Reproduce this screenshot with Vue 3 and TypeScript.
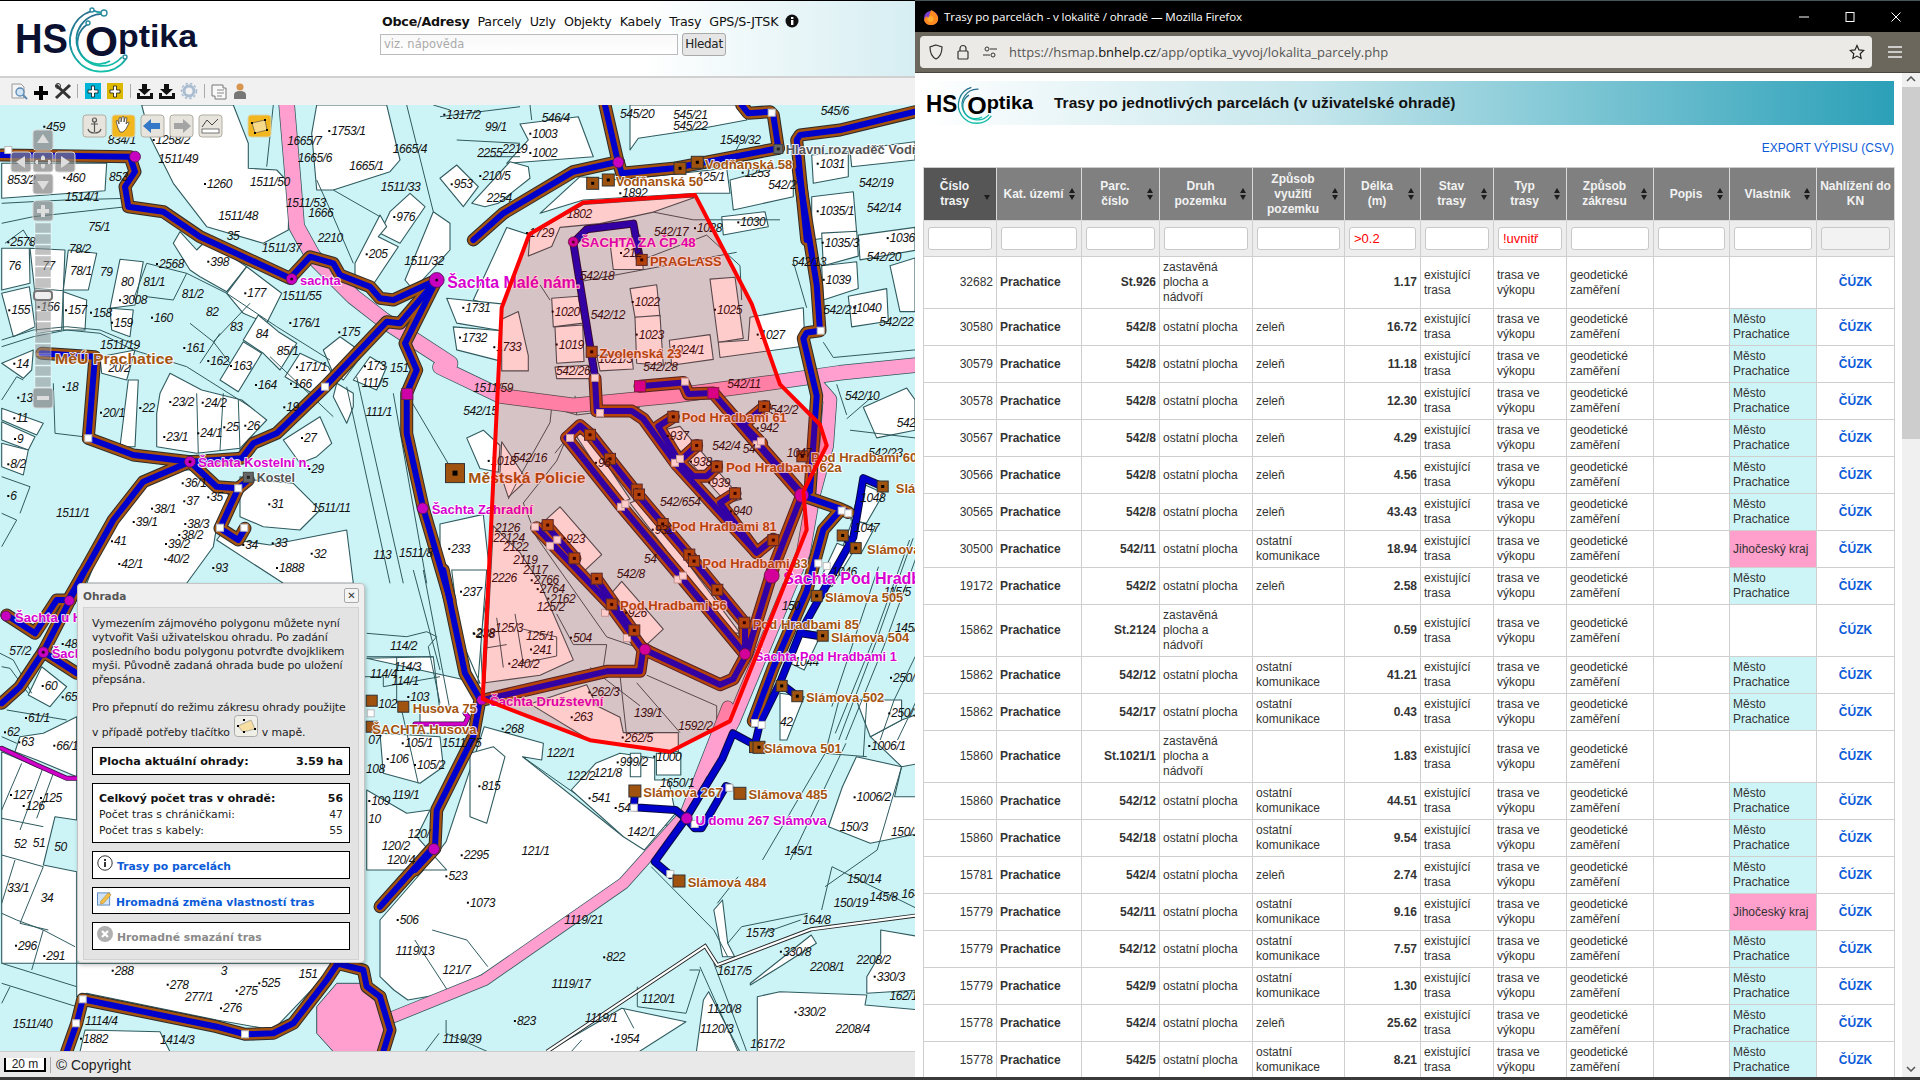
<script setup lang="ts">
type Zm = [number, number, number, number];
const Z6: Zm = [0, 100, 3, 3];
const Z4: Zm = [440, 170, 3, 2.613];
const Z9: Zm = [440, 100, 3, 3];
const Z7: Zm = [380, 700, 2.876, 3];
const Z11: Zm = [340, 570, 3, 3];
const Z10: Zm = [0, 570, 3, 3];
const Z12: Zm = [780, 440, 2.893, 3];
const Z3: Zm = [60, 570, 3, 3];

const px = (z: Zm, x: number) => +(z[0] + x / z[2]).toFixed(1);
const py = (z: Zm, y: number) => +(z[1] + y / z[3]).toFixed(1);
const pts = (z: Zm, s: string) =>
  s.trim().split(/\s+/).map((p) => { const [a, b] = p.split(",").map(Number); return px(z, a) + "," + py(z, b); }).join(" ");
const many = (z: Zm, list: string[]) => list.map((s) => pts(z, s));

const parcels: string[] = [
  ...many(Z6, [
    "5,190 320,190 315,272 5,295",
    "425,15 700,15 745,130 745,205 830,210 868,250 865,390 790,430 620,380 520,250 450,110",
    "950,15 1160,15 1200,180 1170,215 1000,270 950,270 935,100",
    "1170,335 1230,280 1275,320 1200,430 1140,400",
    "1065,490 1140,345 1160,380 1135,410 1195,440 1115,560 1065,540",
    "1300,335 1350,370 1350,450 1240,570 1215,540",
    "520,430 540,395 590,450 620,420 740,500 680,575 600,530 570,510",
    "680,580 740,500 845,580 800,670 730,640",
    "730,720 775,645 835,695 890,730 840,810 790,760",
    "660,840 730,725 785,760 715,875",
    "855,830 900,760 985,800 1000,830 945,885",
    "1060,840 1110,770 1160,800 1130,870",
    "5,445 88,445 90,550 5,570",
    "90,445 195,450 190,575 105,580",
    "205,450 290,460 265,570 190,570",
    "360,478 430,485 405,615 330,625",
    "5,580 88,560 105,680 40,710",
    "105,565 190,572 185,690 110,700",
    "190,575 260,600 255,690 190,690",
    "330,625 400,630 390,710 335,690",
    "5,790 100,750 95,810 70,835",
    "300,770 405,750 380,840 305,820",
    "360,1040 385,840 415,840 405,1040",
    "480,880 510,820 605,870 725,900 800,960 720,1045 590,1060 470,1040 470,940",
    "5,925 130,970 110,1005 5,960",
    "5,965 105,1010 85,1050 5,1020",
    "5,1030 85,1050 70,1125 5,1100",
    "850,1020 960,950 995,1030 950,1070 900,1090",
    "720,1130 760,1140 880,1150 960,1230 900,1290 790,1280 720,1250",
    "650,1320 680,1280 710,1320 810,1335 1040,1290 1060,1450 850,1450",
    "430,1160 530,1110 620,1110 690,1190 650,1280 640,1340 560,1450 260,1450 340,1250",
    "970,750 1020,710 1090,760 1030,840 995,810",
    "1010,850 1060,880 1060,920 1040,970 1000,890",
  ]),
  ...many(Z9, [
    "240,72 415,50 460,170 200,190 265,120",
    "0,235 50,195 115,260 70,320",
    "95,310 210,185 265,200 270,235 175,310 135,320",
    "570,15 915,15 920,60 760,90 595,115 570,150",
    "300,340 420,230 540,240 860,205 870,280 770,280 430,300",
    "870,240 1060,190 1060,290 880,330",
    "845,350 975,335 985,380 850,405",
    "1115,165 1225,155 1225,230 1120,250",
    "1230,150 1425,125 1425,180 1235,200",
    "1115,290 1240,275 1250,400 1115,420",
  ]),
  ...many(Z4, [
    "1145,165 1250,160 1255,225 1150,250",
    "1255,170 1425,150 1425,210 1260,235",
    "1145,250 1250,240 1255,310 1150,340",
    "1225,330 1340,310 1345,395 1235,410",
    "1350,250 1425,230 1425,370 1380,370",
    "200,150 270,170 185,360 100,340",
    "20,335 185,350 185,420 50,400",
    "40,410 185,420 185,500 50,470",
    "80,700 130,680 180,720 175,790 120,780",
    "270,170 430,90 770,70 640,110 480,140 360,150 335,200 265,225",
    "510,190 600,170 610,260 520,260",
    "335,335 415,330 428,400 340,410",
    "345,410 428,405 432,500 350,505",
    "570,310 650,300 660,385 585,385",
    "585,385 660,380 670,510 590,505",
    "688,445 810,430 820,495 695,510",
    "810,285 885,280 910,440 835,450",
    "835,450 925,445 930,385 1090,360 1095,460 840,490",
    "470,485 575,480 580,520 480,525",
    "345,515 445,510 450,545 350,545",
    "185,390 235,370 265,485 265,525 185,525",
    "185,710 260,810 205,855 180,790",
    "405,690 440,690 570,860 540,870",
    "570,870 600,860 900,1210 870,1210",
    "665,680 720,670 905,860 860,870",
    "310,920 360,880 485,1005 430,1050",
    "510,1110 545,1075 670,1200 620,1240",
    "160,930 240,1000 300,1080 400,1280 300,1320 135,1340",
    "270,1395 440,1345 470,1400 540,1430 550,1470 715,1470 715,1520 450,1490",
    "1270,620 1400,570 1425,600 1425,680 1310,700",
    "0,925 130,900 150,1060 120,1220 130,1370 115,1380 80,1280 40,1100 0,1000",
  ]),
  ...many(Z7, [
    "0,660 150,480 190,425 300,80 470,130 465,180 410,170 700,410 720,400 850,370 680,560 320,810 190,880 80,900 40,870 0,830",
    "795,160 865,160 865,225 795,225",
    "550,270 620,190 690,160 790,175 790,240 830,240 850,340 760,450 700,410",
    "720,160 750,160 750,230 720,230",
    "480,1055 695,925 880,965 745,1055",
    "910,1055 930,900 945,875 1035,1055",
    "1085,890 1150,875 1400,885 1395,915 1553,930 1553,1055 1085,1055",
    "1440,690 1553,710 1553,870 1400,880 1400,830 1440,760",
    "1065,850 1240,705 1255,730 1150,800 1065,855",
    "1330,260 1370,170 1500,200 1480,290 1553,290 1553,400 1410,430 1290,380",
    "1410,110 1500,60 1553,40 1553,190 1500,200",
    "1370,0 1500,0 1500,60 1410,110",
    "960,630 985,600 1000,730 1020,770 985,770",
  ]),
  ...many(Z11, [
    "80,265 280,260 300,425 240,420 240,490 410,490 430,390 410,385 440,0 335,0 360,200 420,340",
    "120,490 300,500 310,590 240,640 130,610",
    "80,660 200,730 270,720 230,800 320,900 80,900",
    "390,550 460,530 495,560 440,760 390,740",
  ]),
  ...many(Z10, [
    "85,375 125,290 200,350 150,410",
    "5,530 45,545 60,500 130,490 170,470 230,440 230,620 110,570",
    "5,545 110,590 230,630 230,750 165,740 130,885 230,905 230,1180 5,1180",
  ]),
  ...many(Z3, [
    "50,1180 830,1180 640,1380 470,1350 80,1270 50,1280",
    "75,1380 300,1385 330,1445 60,1445",
  ]),
  ...many(Z12, [
    "235,130 300,160 250,250 205,240",
    "210,240 275,260 235,340 180,325",
    "165,310 215,330 150,440 115,420",
    "70,570 120,580 70,690 30,670",
    "0,760 70,770 20,900 0,900",
  ]),
];

const lines: string[] = [
  ...many(Z6, [
    "5,310 195,300 385,295", "5,370 100,350 380,320", "5,740 100,710 200,690 300,700 400,750 560,800 750,920",
    "5,720 100,690 200,680 300,690 420,740", "1040,860 1170,1450", "1070,830 1210,1450", "1180,880 1280,1450",
    "1220,880 1350,1100", "1000,270 1140,350", "810,770 1000,950", "290,840 280,1010", "160,850 165,1000 250,1010",
    "590,880 595,1060", "670,880 660,1050", "715,900 720,1050", "560,520 680,580 830,680 990,780",
    "570,670 640,725 690,790", "640,725 750,610", "600,790 660,700", "440,490 560,520 520,600 440,590", "440,490 400,600",
    "15,430 70,390 100,440", "1300,15 1350,30", "1220,15 1300,335", "820,15 800,200", "950,240 1000,350", "1000,350 1060,490",
    "5,1130 90,1160 60,1240", "5,1240 50,1260 5,1340", "5,900 50,830 70,840",
  ]),
  ...many(Z9, ["0,50 240,20", "270,15 275,60", "50,120 240,130", "120,170 240,170", "1060,190 1070,120", "860,200 900,130"]),
  ...many(Z4, [
    "335,620 330,660 240,800 205,860", "405,590 410,640 330,620", "345,740 400,680", "380,700 350,760 250,870 290,960 500,1220 600,1250",
    "450,1300 600,1400", "620,1320 830,1400 830,1450", "540,1320 560,1480", "720,1470 590,1340", "650,680 960,1020 990,1050",
    "410,640 600,620", "350,1160 400,1240 500,1240 490,1300", "170,1170 190,1300", "225,1160 250,1290", "250,1200 350,1220 350,1270 240,1290",
    "130,1250 200,1240", "620,230 800,170 900,250 905,340", "430,290 890,215", "300,300 330,340", "1060,240 1100,360", "1150,450 1180,490 1425,470",
    "1220,650 1300,590", "1190,560 1220,640", "1230,680 1425,700", "640,110 760,130 1020,130",
  ]),
  ...many(Z7, [
    "780,500 960,690 1000,770", "1270,630 1300,500 1553,630", "1280,560 1430,450 1500,200", "1100,480 1280,160 1400,170", "1180,480 1340,130",
    "1030,530 970,610", "1000,730 1040,680 1230,640", "1100,700 1210,660", "920,800 1030,1055", "960,790 1055,1055", "740,860 740,920 880,940 920,810 890,810",
    "190,960 190,1000 310,1055", "130,1055 170,1000", "550,1055 580,1020", "700,925 730,985", "1400,0 1390,170", "1320,0 1280,160",
    "60,20 110,250", "410,170 560,280", "150,690 250,720 310,800", "100,720 200,880",
  ]),
  ...many(Z11, ["80,190 200,200 260,185 290,200 265,230 300,400", "80,260 280,260", "250,0 330,420", "220,0 300,300", "75,320 130,320 130,350 300,320", "170,400 170,260"]),
  ...many(Z10, ["0,250 40,270 95,370", "5,290 30,295 85,370", "20,420 200,450", "5,500 50,520", "5,745 130,770", "5,855 130,890", "65,580 5,720", "130,590 60,780", "160,610 110,745", "45,870 5,1000", "130,890 60,1060 145,1080", "5,1030 50,1050 130,1080", "225,1130 130,1080 95,1200", "5,1180 230,1250", "5,1240 230,1310", "30,1250 5,1300"]),
  ...many(Z12, ["385,295 280,600 170,900", "405,320 300,620 190,900", "375,300 270,600 160,880", "405,620 330,780 290,900", "340,900 405,760", "285,380 150,800"]),
];

const pinkRoads = [
  { w: 15, p: pts(Z6, "860,15 880,250 890,380 940,470 1060,590 1150,660 1350,790") },
  { w: 14, p: pts(Z4, "0,515 180,590 400,615 700,590 1000,555 1200,530 1425,510") },
  { w: 13, p: pts(Z4, "1130,560 1170,600 1160,720 1120,850 1090,1000 880,1440 800,1568") },
  { w: 11, p: pts(Z7, "1000,20 880,340 700,550 300,840 40,950") },
];
const octagon = pts(Z3, "770,1310 830,1240 900,1240 960,1290 990,1380 960,1445 820,1445 770,1390");

const mainRoutes: string[] = [
  ...many(Z6, [
    "5,165 390,170 405,215 375,260 385,320 490,335 600,410 870,535 930,470 1000,490 1020,525 1110,560 1140,595 1180,600 1310,540",
    "570,1085 725,1075 760,1030 830,1000 975,860 1160,665 1200,670 1310,540",
    "1310,540 1215,730 1250,810 1220,880 1220,1000 1270,1225 1350,1500",
    "570,1085 430,1145 340,1260 270,1385 210,1490",
    "125,760 285,770 265,1015 400,1065 570,1085",
    "570,1085 650,1160 715,1165 745,1140",
    "715,1165 660,1285 715,1320 735,1285",
  ]),
  pts(Z11, "310,0 375,310 420,388 400,500 290,720 285,835 225,900"),
  pts(Z7, "150,445 0,620"),
  ...many(Z10, ["210,90 130,245 60,350 5,400", "130,245 230,310", "20,135 105,190 170,90 210,90", "210,90 250,10"]),
  ...many(Z3, [
    "20,1445 50,1360 68,1288 470,1370 555,1393 640,1390 700,1360 800,1230 830,1185",
    "830,1180 910,1200 920,1250 960,1280",
  ]),
  pts(Z3, "960,1280 990,1380 970,1445"),
  ...many(Z9, [
    "100,420 190,340 400,215 535,185",
    "495,15 535,190",
    "535,185 545,220 700,205 1015,145",
    "1015,145 1000,45 990,35 925,40 905,15",
    "1425,35 1200,90 1080,105 1070,120 1100,420",
  ]),
  ...many(Z4, [
    "1075,0 1130,300 1140,420 1100,425 1090,440 1130,590 1110,840 1085,850",
    "1085,850 1000,1040 920,1265 880,1330 840,1345 630,1260 610,1250 600,1310 500,1310 130,1385",
    "465,545 470,630 575,630 610,650 710,770 950,1000 1000,965",
    "600,565 730,555 745,585 820,583 1085,850",
    "700,645 655,670 720,765 760,800 800,800 830,775",
    "720,760 770,720",
    "885,845 840,870 950,1000",
    "960,720 1085,845",
    "975,618 910,665 965,715",
    "380,700 420,668 450,690 595,850 760,1020 915,1185 915,1262",
    "380,700 545,880 720,1060 915,1265",
    "290,935 510,1135 610,1255",
    "320,930 405,1015",
    "470,1070 580,1205",
    "1085,850 1200,885 1225,895",
    "1200,890 1150,940 1100,1100 1000,1300 940,1440",
  ]),
];
const blueRoutes: string[] = [
  ...many(Z4, [
    "400,190 440,155 580,140 600,235",
    "400,190 465,540",
    "1328,827 1270,805 1240,960 1150,1100 1080,1210 1130,1217",
    "1080,1210 1020,1340 1072,1375",
    "1020,1340 960,1445 945,1500",
    "1210,955 1247,988",
  ]),
  ...many(Z7, [
    "1090,142 1015,100 985,175 880,355 790,485 835,525",
    "880,355 850,330 730,322 733,280",
    "880,355 905,385 925,385 995,258 1005,262",
  ]),
];
const magentaLine = [pts(Z10, "5,535 110,585 200,625 230,625"), pts(Z11, "225,462 375,462 385,440 375,430")];

const whiteNodes = [
  ...[[265, 1015], [975, 860], [715, 1165], [660, 1283], [733, 1283], [25, 150]].map(([x, y]) => [px(Z6, x), py(Z6, y)]),
  ...[[995, 38]].map(([x, y]) => [px(Z9, x), py(Z9, y)]),
  ...[[465, 543], [480, 635], [735, 553], [1142, 420], [390, 700], [950, 717], [963, 709], [705, 765], [720, 755], [543, 880], [556, 873], [713, 1070], [729, 1060], [285, 932], [330, 982], [352, 966], [495, 1157], [561, 1223], [1205, 890], [1225, 897], [1135, 1028], [1160, 1035], [945, 1445], [965, 1450]].map(([x, y]) => [px(Z4, x), py(Z4, y)]),
  ...[[730, 323], [905, 372], [1005, 263], [835, 522]].map(([x, y]) => [px(Z7, x), py(Z7, y)]),
  ...[[92, 430]].map(([x, y]) => [px(Z11, x), py(Z11, y)]),
  ...[[68, 1288], [48, 1360], [555, 1393]].map(([x, y]) => [px(Z3, x), py(Z3, y)]),
];

const sq = (z: Zm, list: number[][], s: number, dot = 3) => list.map(([x, y]) => ({ x: px(z, x) - s / 2, y: py(z, y) - s / 2, s, dot }));
const squares = [
  ...sq(Z4, [[605, 235], [455, 475], [700, 645], [972, 618], [770, 720], [830, 775], [885, 845], [450, 692], [510, 755], [590, 835], [597, 848], [668, 925], [1087, 748], [1000, 967], [748, 1005], [762, 1022], [832, 1097], [913, 1183], [323, 928], [403, 1015], [470, 1068], [515, 1135], [583, 1203], [1328, 827], [1208, 955], [1247, 988], [1130, 1113], [1148, 1217], [1025, 1348], [1072, 1375], [945, 1508]], 11),
  ...sq(Z4, [[45, 792]], 19, 5),
  ...sq(Z9, [[720, 205], [772, 187], [505, 240], [458, 250]], 12),
  ...sq(Z7, [[733, 273], [1035, 280], [860, 543]], 12, 0),
  ...sq(Z7, [[1090, 142]], 12),
  ...sq(Z11, [[95, 392], [190, 410], [95, 470]], 11, 0),
];
const graySquares = [...sq(Z9, [[1015, 147]], 9), ...sq(Z6, [[745, 1132]], 10)];
const magSquares = [...sq(Z4, [[600, 565], [820, 583]], 11, 0), ...sq(Z6, [[1222, 882]], 11, 0)];

const holes = [
  [Z6, 405, 170, 5.5, 0], [Z6, 875, 537, 5.5, 1], [Z6, 1310, 540, 7.5, 1], [Z6, 570, 1085, 5.5, 1], [Z6, 1268, 1225, 5.5, 0],
  [Z4, 615, 1253, 5.5, 0], [Z4, 915, 1265, 5.5, 0], [Z4, 995, 1060, 7.5, 0], [Z4, 1085, 850, 7, 0], [Z4, 125, 1385, 5, 0], [Z4, 400, 188, 5, 1],
  [Z7, 882, 355, 5.5, 0], [Z7, 155, 447, 5.5, 0], [Z9, 535, 187, 5.5, 0],
  [Z10, 208, 92, 5, 0], [Z10, 18, 138, 5, 0], [Z10, 130, 247, 5.5, 1],
].map((h) => ({ x: px(h[0] as Zm, h[1] as number), y: py(h[0] as Zm, h[2] as number), r: h[3] as number, dot: h[4] as number }));

const polygon = pts(Z4, "268,168 430,85 765,65 935,350 1020,560 1140,665 1160,720 1090,840 1100,940 870,1440 690,1520 450,1490 128,1382 185,360");

interface Lbl { x: number; y: number; t: string; dx: number; dot: boolean }
const lab = (z: Zm, s: string): Lbl[] =>
  s.trim().split("\n").map((l) => {
    const [a, b, c] = l.trim().split(" ");
    const dot = c.startsWith(".");
    return { x: px(z, +a), y: py(z, +b) + 4, t: dot ? c.slice(1) : c, dx: dot ? 3 : 0, dot };
  });
const parcelLabels: Lbl[] = [
  ...lab(Z6, `130 80 .459
323 120 834/1
458 120 .1258/2
475 178 1511/49
22 240 853/2
190 233 .460
327 231 853
195 292 1514/1
612 252 .1260
750 246 1511/50
858 308 1511/53
925 338 1666
655 347 1511/48
985 93 .1753/1
862 123 1665/7
893 173 1665/6
1048 197 1665/1
1178 146 1665/4
1142 262 1511/33
1180 351 .976
265 381 75/1
22 427 .2578
207 448 78/2
468 492 .2568
680 408 35
785 445 1511/37
953 415 2210
1097 463 .205
1213 483 1511/32
25 497 76
127 497 77
210 513 78/1
300 516 79
363 546 80
430 547 81/1
622 485 .398
733 580 .177
845 588 1511/55
545 581 81/2
618 636 82
357 601 .3008
25 631 .155
113 621 .156
195 631 .157
270 638 .158
333 668 .159
453 653 .160
690 680 83
767 703 84
868 669 .176/1
1015 697 .175
830 752 85/1
550 744 .161
622 783 .162
690 798 .163
888 802 .171/1
300 735 1511/19
40 791 .14
325 803 20/2
1092 799 .173
1170 804 151
1085 850 111/5
765 855 .164
870 851 .166
188 861 .18
52 893 .13
508 906 .23/2
605 908 .24/2
850 922 .19
1097 937 111/1
300 938 .20/1
418 924 .22
40 955 .11
670 982 .25
733 977 .26
42 1017 .9
490 1011 .23/1
592 1000 .24/1
903 1014 .27
925 1107 .29
22 1093 .8/2
545 1150 .36/1
550 1204 .37
622 1192 .35
453 1226 .38/1
398 1266 .39/1
805 1213 .31
935 1223 1511/11
22 1188 .6
168 1240 1511/1
553 1272 .38/3
535 1305 .38/2
495 1332 .39/2
493 1378 .40/2
333 1324 .41
355 1392 .42/1
727 1335 .34
815 1330 .33
932 1361 .32
1120 1365 113
1197 1360 1511/8
828 1404 .1888
637 1404 .93`),
  ...lab(Z9, `10 44 .1317/2
305 55 546/4
135 80 99/1
540 42 545/20
700 46 545/21
700 78 545/22
1142 32 545/6
268 101 .1003
268 159 .1002
112 160 2255
187 146 2219
840 120 1549/32
1130 191 .1031
118 228 .210/5
32 253 .953
140 295 2254
770 230 125/1
905 218 .1253
985 255 542/2
1257 250 542/19
538 280 .1892`),
  ...lab(Z4, `892 137 .1030
762 152 .1028
380 115 1802
258 165 .1729
642 163 542/17
540 217 .212
1280 100 542/14
1130 108 .1035/1
1145 190 .1035/3
1340 178 .1036
1055 240 542/13
1280 228 542/20
1148 287 .1039
420 278 542/18
575 345 .1022
1240 360 .1040
67 360 .1731
335 370 .1020
452 378 542/12
822 365 .1025
1150 365 542/21
1318 398 542/22
57 438 .1732
160 463 .1733
347 456 .1019
587 430 .1023
950 430 .1027
690 470 1024/1
475 495 1021/3
348 525 542/26
610 515 542/28
100 570 1511/59
862 560 542/11
1215 590 542/10
70 630 542/15
1370 662 542/
1285 740 542/23
143 760 .1018
218 752 542/16
680 695 .937
750 762 .938
817 722 542/4
908 730 54
950 675 .942
990 628 542/2
465 765 .96
805 817 .939
660 868 542/654
870 892 .940
370 963 .923
635 940 .932
1040 740 1047
530 1055 542/8
612 1017 54
555 1157 .926
25 990 .233
165 935 2126
160 962 22124
190 985 2122
220 1020 2119
250 1045 2117
272 1072 .2766
290 1095 .2764
322 1120 .2162
290 1142 125/2
155 1067 2226
60 1102 .237
165 1197 125/3
100 1212 .238
258 1217 125/1
390 1222 .504
270 1253 .241
205 1290 .240/2
445 1365 .262/3
392 1430 .263
582 1418 139/1
715 1452 1592/2
185 1460 .268
545 1483 .262/5
320 1522 122/1
640 1533 .1000
530 1548 .999/2
1285 1505 .1006/1
1345 1420 .250/3
1350 1327 .250/
1365 1197 145/6`),
  ...lab(Z7, `283 259 .815
600 295 .541
675 324 .54
615 218 121/8
538 228 122/2
805 248 1650/1
1362 292 .1006/2
1322 380 150/3
1470 397 150/1
712 397 142/1
1163 452 145/1
407 452 121/1
232 466 .2295
80 403 120/
5 438 120/2
20 480 120/4
35 285 119/1
188 529 .523
250 608 .1073
48 660 .506
1343 538 150/14
1305 608 150/19
1408 592 145/8
1500 582 164
1215 660 164/8
1053 698 157/3
1150 755 .330/8
530 660 1119/21
45 752 1119/13
642 772 .822
1237 801 2208/1
1370 780 2208/2
1420 830 .330/3
1465 887 162/17
180 810 121/7
970 812 1617/5
493 852 1119/17
752 898 1120/1
942 928 1120/8
1192 937 .330/2
385 963 .823
180 1017 1119/39
920 988 1120/3
1310 987 2208/4
665 1018 .1954
1065 1032 1617/2
590 955 1119/1`),
  ...lab(Z11, `150 228 114/2
398 190 .238
162 292 114/3
90 312 114/4
155 333 114/1
202 381 .103
115 402 102
85 510 07
185 520 .105/1
305 520 1511/75
140 567 .106
222 585 .105/2
78 598 108
85 693 .109
85 747 10`),
  ...lab(Z10, `185 222 .48
28 243 57/2
125 348 .60
185 382 .65
75 444 .61/1
12 487 .62
55 517 .63
160 527 .66/1
30 675 .127
68 708 .126
120 684 .125
42 822 52
98 818 51
163 830 50
22 953 33/1
122 985 34
45 1127 .296
130 1158 .291
38 1363 1511/40`),
  ...lab(Z3, `155 1202 .288
482 1203 3
595 1240 .525
716 1212 151
320 1244 .278
375 1282 277/1
527 1262 .275
480 1315 .276
75 1352 1114/4
60 1406 .1882
300 1410 1414/3`),
  ...lab(Z12, `232 173 1048
215 265 1047
150 395 1046
5 497 150
40 665 1044
0 845 42
300 455 115/5`),
];

type Kind = "b" | "m" | "g";
const nm = (z: Zm, x: number, y: number, t: string, k: Kind, s: number, end?: number) => ({
  x: px(z, x), y: py(z, y) + s * 0.36, t, k, s, len: end !== undefined ? +((end - x) / z[2]).toFixed(1) : undefined,
});
const names = [
  nm(Z4, 423, 190, "ŠACHTA ZA ČP 48", "m", 13, 767),
  nm(Z4, 630, 238, "PRAGLASS", "b", 13, 845),
  nm(Z4, 478, 480, "Zvolenská 23", "b", 13, 725),
  nm(Z4, 22, 293, "Šachta Malé nám.", "m", 16, 420),
  nm(Z4, 725, 647, "Pod Hradbami 61", "b", 13, 1040),
  nm(Z4, 858, 778, "Pod Hradbami  62a", "b", 13, 1205),
  nm(Z4, 1113, 752, "Pod Hradbami  60", "b", 13),
  nm(Z4, 85, 803, "Městská Policie", "b", 15.5, 437),
  nm(Z4, 695, 930, "Pod Hradbami 81", "b", 13, 1010),
  nm(Z4, 787, 1027, "Pod Hradbami 83", "b", 13, 1103),
  nm(Z4, 1030, 1068, "Šachta Pod Hradbami", "m", 16),
  nm(Z4, 1155, 1117, "Slámova 505", "b", 13, 1390),
  nm(Z4, 1173, 1222, "Slámova 504", "b", 13, 1408),
  nm(Z4, 938, 1188, "Pod Hradbami 85", "b", 13, 1257),
  nm(Z4, 540, 1137, "Pod Hradbami 56", "b", 13, 860),
  nm(Z4, 945, 1270, "Šachta Pod Hradbami 1", "m", 13, 1370),
  nm(Z4, 1098, 1378, "Slámova 502", "b", 13, 1333),
  nm(Z4, 972, 1512, "Slámova 501", "b", 13, 1205),
  nm(Z4, 150, 1388, "Šachta Družstevní", "m", 13, 490),
  nm(Z12, 252, 327, "Slámova 503", "b", 13),
  nm(Z12, 335, 145, "Slámova", "b", 13),
  nm(Z6, 900, 542, "sachta", "m", 12.5, 1022),
  nm(Z6, 165, 777, "MěÚ Prachatice", "b", 15, 520),
  nm(Z6, 595, 1088, "Šachta Kostelní n.", "m", 13, 930),
  nm(Z6, 770, 1132, "Kostel", "g", 13.5, 885),
  nm(Z6, 1295, 1228, "Šachta Zahradní", "m", 13),
  nm(Z9, 1037, 148, "Hlavní rozvaděč Vodňanská", "g", 13),
  nm(Z9, 795, 193, "Vodňanská 58", "b", 13, 1057),
  nm(Z9, 527, 245, "Vodňanská 50", "b", 13, 790),
  nm(Z10, 45, 143, "Šachta u Hus", "m", 13),
  nm(Z10, 155, 250, "Šachta", "m", 13),
  nm(Z11, 218, 415, "Husova 75", "b", 13, 410),
  nm(Z11, 97, 478, "ŠACHTA Husova", "b", 13, 410),
  nm(Z7, 757, 278, "Slámova 267", "b", 13, 985),
  nm(Z7, 1060, 283, "Slámova 485", "b", 13, 1287),
  nm(Z7, 907, 360, "U domu 267 Slámova", "m", 13, 1285),
  nm(Z7, 885, 547, "Slámova 484", "b", 13, 1112),
];

const doubleLine = pts(Z7, "480,1055 935,738 970,795 1240,688 1553,645");
const sliderBars = Array.from({ length: 15 }, (_, i) => 223 + i * 11);

interface Col { t: string[]; w: number; cls?: string }
const cols: Col[] = [
  { t: ["Číslo", "trasy"], w: 73 }, { t: ["Kat. území"], w: 85 }, { t: ["Parc.", "číslo"], w: 78 },
  { t: ["Druh", "pozemku"], w: 93 }, { t: ["Způsob", "využití", "pozemku"], w: 92 }, { t: ["Délka", "(m)"], w: 76 },
  { t: ["Stav", "trasy"], w: 73 }, { t: ["Typ", "trasy"], w: 73 }, { t: ["Způsob", "zákresu"], w: 87 },
  { t: ["Popis"], w: 76 }, { t: ["Vlastník"], w: 87 }, { t: ["Nahlížení do", "KN"], w: 78 },
];
const filters = ["", "", "", "", "", ">0.2", "", "!uvnitř", "", "", "", ""];
const Z = "zastavěná plocha a nádvoří";
const O = "ostatní plocha";
const K = "ostatní komunikace";
const rows: [string, string, string, string, string, string][] = [
  ["32682", "St.926", Z, "", "1.17", ""], ["30580", "542/8", O, "zeleň", "16.72", "M"], ["30579", "542/8", O, "zeleň", "11.18", "M"],
  ["30578", "542/8", O, "zeleň", "12.30", "M"], ["30567", "542/8", O, "zeleň", "4.29", "M"], ["30566", "542/8", O, "zeleň", "4.56", "M"],
  ["30565", "542/8", O, "zeleň", "43.43", "M"], ["30500", "542/11", O, K, "18.94", "J"], ["19172", "542/2", O, "zeleň", "2.58", "M"],
  ["15862", "St.2124", Z, "", "0.59", ""], ["15862", "542/12", O, K, "41.21", "M"], ["15862", "542/17", O, K, "0.43", "M"],
  ["15860", "St.1021/1", Z, "", "1.83", ""], ["15860", "542/12", O, K, "44.51", "M"], ["15860", "542/18", O, K, "9.54", "M"],
  ["15781", "542/4", O, "zeleň", "2.74", "M"], ["15779", "542/11", O, K, "9.16", "J"], ["15779", "542/12", O, K, "7.57", "M"],
  ["15779", "542/9", O, K, "1.30", "M"], ["15778", "542/4", O, "zeleň", "25.62", "M"], ["15778", "542/5", O, K, "8.21", "M"],
];
const navItems = ["Parcely", "Uzly", "Objekty", "Kabely", "Trasy", "GPS/S-JTSK"];
</script>

<template>
  <div class="screen">
    <section class="mapwin">
      <header class="hdr">
        <svg class="logo" viewBox="0 0 200 76" width="200" height="76">
          <defs>
            <linearGradient id="lgA" x1="0" y1="0" x2="0" y2="1"><stop offset="0" stop-color="#2b6c8c" /><stop offset="0.55" stop-color="#1a8fa0" /><stop offset="1" stop-color="#12bfa8" /></linearGradient>
          </defs>
          <g fill="none" stroke="url(#lgA)" stroke-width="1.8">
            <path d="M92 11 A31 31 0 1 0 126 59" />
            <path d="M104 14 A26 26 0 1 0 122 57" />
            <path d="M88 24 A21 21 0 0 0 110 61" />
            <path d="M92 10 Q98 13 104 13" />
          </g>
          <g fill="#fff" stroke="#2b8ca0" stroke-width="1.4"><circle cx="92" cy="10" r="2" /><circle cx="104" cy="13" r="3" /><circle cx="88" cy="23" r="2" /><circle cx="125" cy="57" r="2" /></g>
          <g class="logotext">
            <text x="15" y="53" font-size="42" textLength="53" lengthAdjust="spacingAndGlyphs">HS</text>
            <text x="85" y="56" font-size="42" textLength="33" lengthAdjust="spacingAndGlyphs">O</text>
            <text x="118" y="47" font-size="31" textLength="79" lengthAdjust="spacingAndGlyphs">ptika</text>
          </g>
        </svg>
        <div class="search">
          <nav class="nav">
            <b>Obce/Adresy</b><span v-for="n in navItems" :key="n">{{ n }}</span>
            <svg class="infoi" viewBox="0 0 14 14" width="14" height="14"><circle cx="7" cy="7" r="6.5" fill="#111" /><rect x="6" y="6" width="2.4" height="5" fill="#fff" /><rect x="6" y="3" width="2.4" height="2" fill="#fff" /></svg>
          </nav>
          <div class="sbar">
            <div class="sinput">viz. nápověda</div>
            <div class="sbtn">Hledat</div>
          </div>
        </div>
      </header>
      <div class="tools">
        <svg viewBox="0 76 260 29" width="260" height="29">
          <path d="M12 84h9l3 3v11H12z" fill="#f4f4f4" stroke="#999" />
          <circle cx="20" cy="92" r="4" fill="#cfe4f5" stroke="#5b87b0" stroke-width="1.3" /><path d="M23 95l4 4" stroke="#5b87b0" stroke-width="2" />
          <path d="M34 91h5v-5h4v5h5v4h-5v5h-4v-5h-5z" fill="#000" />
          <path d="M56 85l14 13M70 85l-14 13" stroke="#333" stroke-width="3" /><circle cx="58" cy="86" r="2.5" fill="none" stroke="#333" />
          <rect x="77" y="84" width="1" height="14" fill="#aaa" />
          <rect x="85" y="83" width="16" height="16" fill="#00b4d8" /><path d="M88 90h3.5v-4h3v4h3.5v3h-3.5v4h-3v-4H88z" fill="#fff" stroke="#000" stroke-width=".7" />
          <rect x="107" y="83" width="16" height="16" fill="#dcb800" /><path d="M110 90h3.5v-4h3v4h3.5v3h-3.5v4h-3v-4H110z" fill="#fff" stroke="#000" stroke-width=".7" />
          <rect x="130" y="84" width="1" height="14" fill="#aaa" />
          <g fill="#111"><path d="M142 84h5v5h4l-6.500 6-6.500-6h4z" /><path d="M137 93h3v3h10v-3h3v6h-16z" /></g>
          <g fill="#111"><path d="M164 84h5v5h4l-6.500 6-6.500-6h4z" /><path d="M159 93h3v3h10v-3h3v6h-16z" /></g>
          <circle cx="189" cy="91" r="5" fill="none" stroke="#a9bcd0" stroke-width="3" /><circle cx="189" cy="91" r="7.500" fill="none" stroke="#a9bcd0" stroke-width="1.500" stroke-dasharray="2.500 2" />
          <rect x="204" y="84" width="1" height="14" fill="#aaa" />
          <path d="M212 85h11v3h3v11h-11v-3h-3z" fill="#f8f8f8" stroke="#777" /><path d="M217 90h7M217 93h7M217 96h5" stroke="#888" />
          <circle cx="240" cy="87" r="3.500" fill="#d8954f" /><path d="M234 99v-4q0-4 6-4t6 4v4z" fill="#777" />
        </svg>
      </div>
      <div class="mapwrap">
        <svg class="map" viewBox="0 105 915 946" width="915" height="946">
          <rect x="0" y="105" width="915" height="946" fill="#ccf4f7" />
          <polygon v-for="(p, i) in parcels" :key="'p' + i" :points="p" class="parcel" />
          <polyline v-for="(p, i) in lines" :key="'l' + i" :points="p" class="cad" />
          <polyline :points="doubleLine" class="dl1" /><polyline :points="doubleLine" class="dl2" />
          <polyline v-for="(r, i) in pinkRoads" :key="'ro' + i" :points="r.p" class="rt" stroke="#2f5b5f" :stroke-width="r.w + 1.5" />
          <polyline v-for="(r, i) in pinkRoads" :key="'ri' + i" :points="r.p" class="rt" stroke="#ff9fcf" :stroke-width="r.w" />
          <polygon :points="octagon" fill="#ff9fcf" stroke="#2f5b5f" />
          <polyline v-for="(m, i) in magentaLine" :key="'mg' + i" :points="m" class="rt" stroke="#3a1040" stroke-width="5" />
          <polyline v-for="(m, i) in magentaLine" :key="'mh' + i" :points="m" class="rt" stroke="#d000c8" stroke-width="3.500" />
          <polyline v-for="(r, i) in blueRoutes" :key="'b1' + i" :points="r" class="rt" stroke="#0a0a40" stroke-width="8" />
          <polyline v-for="(r, i) in mainRoutes" :key="'a1' + i" :points="r" class="rt" stroke="#2b2b2b" stroke-width="13" />
          <polyline v-for="(r, i) in mainRoutes" :key="'a2' + i" :points="r" class="rt" stroke="#a4530f" stroke-width="11" />
          <polyline v-for="(r, i) in mainRoutes" :key="'a3' + i" :points="r" class="rt" stroke="#0000cd" stroke-width="6" />
          <polyline v-for="(r, i) in blueRoutes" :key="'b2' + i" :points="r" class="rt" stroke="#0000cd" stroke-width="6" />
          <rect v-for="(n, i) in whiteNodes" :key="'n' + i" :x="n[0] - 3.5" :y="n[1] - 3.5" width="7" height="7" class="node" />
          <g v-for="(s, i) in squares" :key="'s' + i">
            <rect :x="s.x" :y="s.y" :width="s.s" :height="s.s" class="bsq" />
            <rect v-if="s.dot" :x="s.x + s.s / 2 - s.dot / 2" :y="s.y + s.s / 2 - s.dot / 2" :width="s.dot" :height="s.dot" fill="#000" />
          </g>
          <g v-for="(s, i) in graySquares" :key="'g' + i">
            <rect :x="s.x" :y="s.y" :width="s.s" :height="s.s" fill="#666" stroke="#444" />
            <rect :x="s.x + s.s / 2 - 1.5" :y="s.y + s.s / 2 - 1.5" width="3" height="3" fill="#222" />
          </g>
          <rect v-for="(s, i) in magSquares" :key="'ms' + i" :x="s.x" :y="s.y" :width="s.s" :height="s.s" fill="#d000a8" stroke="#702050" />
          <g v-for="(h, i) in holes" :key="'h' + i">
            <circle :cx="h.x" :cy="h.y" :r="h.r" fill="#c800c0" stroke="#4a1848" stroke-width=".8" />
            <circle v-if="h.dot" :cx="h.x" :cy="h.y" r="1.500" fill="#200020" />
          </g>
          <g class="plabels">
            <template v-for="(l, i) in parcelLabels" :key="'t' + i">
              <rect v-if="l.dot" :x="l.x" :y="l.y - 5" width="2" height="2" fill="#000" />
              <text :x="l.x + l.dx" :y="l.y">{{ l.t }}</text>
            </template>
          </g>
          <g class="names">
            <template v-for="(n, i) in names" :key="'nm' + i">
              <text v-if="n.len" :x="n.x" :y="n.y" :class="'n' + n.k" :font-size="n.s" :textLength="n.len" lengthAdjust="spacingAndGlyphs">{{ n.t }}</text>
              <text v-else :x="n.x" :y="n.y" :class="'n' + n.k" :font-size="n.s">{{ n.t }}</text>
            </template>
          </g>
          <polygon :points="polygon" class="ohrada" />

          <g class="ctrl">
            <rect x="33" y="130" width="20" height="20" rx="3" /><rect x="11" y="152" width="20" height="20" rx="3" /><rect x="33" y="152" width="20" height="20" rx="3" /><rect x="55" y="152" width="20" height="20" rx="3" /><rect x="33" y="174" width="20" height="20" rx="3" /><rect x="33" y="201" width="20" height="20" rx="3" /><rect x="33" y="388" width="20" height="20" rx="3" />
          </g>
          <g fill="#ddd">
            <path d="M43 134l6 9H37z" /><path d="M16 162l9-6v12z" /><path d="M70 162l-9-6v12z" /><path d="M43 190l-6-9h12z" />
            <path d="M41 160h4v-3l-2-2-2 2zM41 164h4v3l-2 2-2-2zM38 160v4h-2l-1-2 1-2zM48 160v4h2l1-2-1-2z" />
            <path d="M37 209h4v-4h4v4h4v4h-4v4h-4v-4h-4z" /><path d="M37 396h12v4H37z" />
          </g>
          <rect v-for="y in sliderBars" :key="y" x="35" :y="y" width="16" height="10" class="bar" />
          <rect x="34" y="291" width="18" height="9" rx="3" fill="#eee" stroke="#777" stroke-width="2" />

          <g class="tbtn">
            <rect x="83" y="115" width="23" height="22" rx="3" /><rect x="112" y="115" width="23" height="22" rx="3" fill="#f2b71f" /><rect x="141" y="115" width="23" height="22" rx="3" /><rect x="170" y="115" width="23" height="22" rx="3" /><rect x="199" y="115" width="23" height="22" rx="3" /><rect x="248" y="115" width="23" height="22" rx="3" fill="#f2b71f" />
          </g>
          <g fill="none" stroke="#555" stroke-width="1.200"><circle cx="94.500" cy="120" r="2" /><path d="M94.500 122v10M88 129q1 4 6.500 4t6.500-4M91 124h7" /></g>
          <path d="M118 128l-2-7q1-1 2 0l1 3v-6q1-1 2 0v4l1-5q1-1 2 0v5l1-4q1-1 2 0l-1 6 2-2q1 0 1 1l-3 6-3 3h-3z" fill="#fff" stroke="#444" stroke-width=".8" />
          <path d="M151 119l-8 7 8 7v-4h9v-6h-9z" fill="#3578c8" />
          <path d="M183 119l8 7-8 7v-4h-9v-6h9z" fill="#a4a4a4" />
          <path d="M202 127l5-7 5 5 6-6" fill="none" stroke="#444" /><rect x="202" y="129" width="17" height="4" fill="#fff" stroke="#444" stroke-width=".7" />
          <polygon points="252,123 265,120 267,130 255,133" fill="#f7d98a" stroke="#444" stroke-width=".6" />
          <g fill="#000"><rect x="251" y="122" width="2" height="2" /><rect x="264" y="119" width="2" height="2" /><rect x="266" y="129" width="2" height="2" /><rect x="254" y="132" width="2" height="2" /></g>
        </svg>

        <div class="popup">
          <div class="ptitle"><span>Ohrada</span><span class="pclose">✕</span></div>
          <div class="pbody">
            <p class="ptext">Vymezením zájmového polygonu můžete nyní vytvořit Vaši uživatelskou ohradu. Po zadání posledního bodu polygonu potvrďte dvojklikem myši. Původně zadaná ohrada bude po uložení přepsána.</p>
            <p class="ptext gap">Pro přepnutí do režimu zákresu ohrady použijte</p>
            <p class="ptext icoline"><span>v případě potřeby tlačítko</span>
              <svg class="polyi" viewBox="0 0 24 22" width="24" height="22"><rect x=".5" y=".5" width="23" height="21" rx="3" fill="#efefe8" stroke="#aaa" /><polygon points="4,11 17,5 21,14 9,17" fill="#f7dfa3" stroke="#777" stroke-width=".5" /><g fill="#000"><rect x="3" y="10" width="2" height="2" /><rect x="9" y="4" width="2" height="2" /><rect x="20" y="13" width="2" height="2" /><rect x="9" y="16" width="2" height="2" /></g></svg>
              <span>v mapě.</span></p>
            <div class="box b1"><b>Plocha aktuální ohrady:</b><b>3.59 ha</b></div>
            <div class="box b2">
              <div class="brow main"><b>Celkový počet tras v ohradě:</b><b>56</b></div>
              <div class="brow"><span>Počet tras s chráničkami:</span><span>47</span></div>
              <div class="brow"><span>Počet tras s kabely:</span><span>55</span></div>
            </div>
            <div class="box act"><svg viewBox="0 0 16 16" width="16" height="16"><circle cx="8" cy="8" r="7.200" fill="#fff" stroke="#333" /><rect x="7" y="7" width="2" height="5" fill="#333" /><rect x="7" y="4" width="2" height="2" fill="#333" /></svg><b class="lnk">Trasy po parcelách</b></div>
            <div class="box act act2"><svg viewBox="0 0 16 16" width="15" height="15"><rect x=".5" y="2" width="13" height="13" fill="#cfe2f7" stroke="#5a8ac0" /><path d="M4 11l8-9 3 2-8 9-3 1z" fill="#f5c04a" stroke="#b08020" stroke-width=".6" /></svg><b class="lnk">Hromadná změna vlastností tras</b></div>
            <div class="box act"><svg viewBox="0 0 16 16" width="16" height="16"><circle cx="8" cy="8" r="8" fill="#b0b0b0" /><path d="M5 5l6 6M11 5l-6 6" stroke="#fff" stroke-width="2.200" /></svg><b class="lnk dis">Hromadné smazání tras</b></div>
          </div>
        </div>
      </div>
      <footer class="ftr">
        <div class="scale">20 m</div>
        <span class="fsep"></span>
        <span class="copy"><i>©</i> Copyright</span>
      </footer>
    </section>

    <section class="ffwin">
      <div class="ffbar">
        <svg viewBox="0 0 16 16" width="16" height="16"><circle cx="8" cy="9" r="7" fill="#7a3fd0" /><path d="M8 1q5 2 7 7 1 6-5 8-7 1-9-5 1-3 3-4 0 2 2 2 0-3 2-8z" fill="#ff8a1f" /><circle cx="7.500" cy="10" r="3" fill="#ffd23f" opacity=".5" /></svg>
        <span class="fftitle">Trasy po parcelách - v lokalitě / ohradě — Mozilla Firefox</span>
        <div class="wctl">
          <svg viewBox="0 0 12 12" width="12" height="12"><path d="M1 6h10" stroke="#fff" /></svg>
          <svg viewBox="0 0 12 12" width="12" height="12"><rect x="2" y="1.500" width="8" height="9" fill="none" stroke="#fff" /></svg>
          <svg viewBox="0 0 12 12" width="12" height="12"><path d="M1.500 1.500l9 9M10.500 1.500l-9 9" stroke="#fff" /></svg>
        </div>
      </div>
      <div class="fftool">
        <div class="urlbox">
          <svg viewBox="0 0 16 16" width="16" height="16"><path d="M8 1l6 2q0 9-6 12Q2 12 2 3z" fill="none" stroke="#333" stroke-width="1.200" /></svg>
          <svg viewBox="0 0 16 16" width="16" height="16"><rect x="3" y="7" width="10" height="8" rx="1" fill="none" stroke="#333" stroke-width="1.200" /><path d="M5 7V4.500a3 3 0 0 1 6 0V7" fill="none" stroke="#333" stroke-width="1.200" /></svg>
          <svg viewBox="0 0 16 16" width="16" height="16"><path d="M8 5h7M1 11h7" stroke="#333" stroke-width="1.200" /><circle cx="5" cy="5" r="2" fill="none" stroke="#333" /><circle cx="11" cy="11" r="2" fill="none" stroke="#333" /></svg>
          <span class="url">https://hsmap.<em>bnhelp.cz</em>/app/optika_vyvoj/lokalita_parcely.php</span>
          <svg class="star" viewBox="0 0 16 16" width="16" height="16"><path d="M8 1.500l2 4.400 4.700.6-3.500 3.200.9 4.700L8 12.100l-4.100 2.300.9-4.700L1.300 6.500 6 5.900z" fill="none" stroke="#222" stroke-width="1.200" /></svg>
        </div>
        <svg class="burger" viewBox="0 0 16 16" width="16" height="16"><path d="M1 3h14M1 8h14M1 13h14" stroke="#eee" stroke-width="1.500" /></svg>
      </div>
      <div class="ffbody">
        <main class="content">
          <div class="banner">
            <svg viewBox="10 0 190 76" width="112" height="44.800">
              <defs>
                <linearGradient id="lgB" x1="0" y1="0" x2="0" y2="1"><stop offset="0" stop-color="#2b6c8c" /><stop offset="1" stop-color="#12bfa8" /></linearGradient>
              </defs>
              <g fill="none" stroke="url(#lgB)" stroke-width="2.200">
                <path d="M92 11 A31 31 0 1 0 126 59" /><path d="M104 14 A26 26 0 1 0 122 57" /><path d="M88 24 A21 21 0 0 0 110 61" />
              </g>
              <g class="logotext blk">
                <text x="15" y="53" font-size="42" textLength="53" lengthAdjust="spacingAndGlyphs">HS</text>
                <text x="85" y="56" font-size="42" textLength="33" lengthAdjust="spacingAndGlyphs">O</text>
                <text x="118" y="47" font-size="31" textLength="79" lengthAdjust="spacingAndGlyphs">ptika</text>
              </g>
            </svg>
            <h1>Trasy po jednotlivých parcelách (v uživatelské ohradě)</h1>
          </div>
          <div class="export"><a>EXPORT VÝPISU (CSV)</a></div>
          <table class="tbl">
            <colgroup><col v-for="(c, i) in cols" :key="i" :width="c.w" /></colgroup>
            <thead>
              <tr class="hrow">
                <th v-for="(c, i) in cols" :key="i" :class="{ sorted: i === 0, noicon: i === 11 }">
                  <span class="th-t"><template v-for="(l, j) in c.t" :key="j"><br v-if="j" />{{ l }}</template></span>
                  <span v-if="i === 0" class="sort one"></span>
                  <span v-else-if="i !== 11" class="sort"></span>
                </th>
              </tr>
              <tr class="frow">
                <td v-for="(f, i) in filters" :key="i"><div class="fin" :class="{ off: i === 11 }">{{ f }}</div></td>
              </tr>
            </thead>
            <tbody>
              <tr v-for="(r, i) in rows" :key="i">
                <td class="r">{{ r[0] }}</td>
                <td><b>Prachatice</b></td>
                <td class="r"><b>{{ r[1] }}</b></td>
                <td>{{ r[2] }}</td>
                <td>{{ r[3] }}</td>
                <td class="r"><b>{{ r[4] }}</b></td>
                <td>existující trasa</td>
                <td>trasa ve výkopu</td>
                <td>geodetické zaměření</td>
                <td></td>
                <td :class="{ own: r[5] === 'M', kraj: r[5] === 'J' }">{{ r[5] === 'M' ? 'Město Prachatice' : r[5] === 'J' ? 'Jihočeský kraj' : '' }}</td>
                <td class="c"><a class="cz">ČÚZK</a></td>
              </tr>
            </tbody>
          </table>
        </main>
        <aside class="sb">
          <svg class="sa" viewBox="0 0 10 6" width="10" height="6"><path d="M1 5l4-4 4 4" fill="none" stroke="#555" stroke-width="1.500" /></svg>
          <div class="thumb"></div>
          <svg class="sa dn" viewBox="0 0 10 6" width="10" height="6"><path d="M1 1l4 4 4-4" fill="none" stroke="#555" stroke-width="1.500" /></svg>
        </aside>
      </div>
    </section>
  </div>
</template>

<style scoped>
.screen { display: flex; width: 1920px; height: 1080px; overflow: hidden; background: #3a3a3a; font-family: "Liberation Sans", Arial, sans-serif; }
.mapwin { width: 915px; height: 1077px; display: flex; flex-direction: column; border-top: 1px solid #000; flex: none; position: relative; }
.hdr { height: 75px; display: flex; background: linear-gradient(90deg, #fff 0%, #fff 70%, #d6eef2 100%); flex: none; }
.logo { flex: none; margin-top: -1px; }
.search { margin-left: 182px; padding-top: 12px; }
.nav { display: flex; align-items: center; height: 16px; font-family: "DejaVu Sans", sans-serif; font-size: 12.700px; color: #111; gap: 8px; white-space: nowrap; letter-spacing: -0.2px; }
.nav b { letter-spacing: -0.25px; }
.infoi { margin-left: -1px; }
.sbar { display: flex; gap: 4px; margin-top: 4px; align-items: center; margin-left: -2px; }
.sinput { width: 298px; height: 21px; box-sizing: border-box; background: linear-gradient(#f8f8f8, #fff); border: 1px solid #bbb; color: #aaa; font: 11.500px/19px "DejaVu Sans", sans-serif; padding-left: 3px; }
.sbtn { width: 44px; height: 23px; box-sizing: border-box; border: 1px solid #aaa; border-radius: 3px; background: #e6e6e6; color: #222; text-align: center; font: 12px/21px "DejaVu Sans", sans-serif; letter-spacing: -0.3px; }
.tools { height: 29px; box-sizing: border-box; flex: none; background: #f1f1f1; border-top: 2px solid #d0d0d0; margin-top: 0; display: flex; overflow: hidden; }
.tools svg { margin-top: -2px; }
.mapwrap { position: relative; height: 946px; flex: none; overflow: hidden; }
.map { display: block; }
.parcel { fill: #fff; stroke: #2f5b5f; stroke-width: 1.1; stroke-linejoin: round; }
.cad { fill: none; stroke: #2f5b5f; stroke-width: 1; }
.dl1 { fill: none; stroke: #222; stroke-width: 4; }
.dl2 { fill: none; stroke: #fff; stroke-width: 2.200; }
.rt { fill: none; stroke-linejoin: round; stroke-linecap: round; }
.node { fill: #fff; stroke: #bbb; stroke-width: 1; }
.bsq { fill: #a0520f; stroke: #333; stroke-width: 1; }
.plabels text { font: italic 12px "Liberation Sans", Arial, sans-serif; letter-spacing: -0.4px; fill: #111; }
.names text { font-family: "Liberation Sans", Arial, sans-serif; font-weight: 700; paint-order: stroke; stroke: rgba(255, 255, 255, 0.85); stroke-width: 2px; stroke-linejoin: round; }
.nb { fill: #a4530f; }
.nm { fill: #d800d0; }
.ng { fill: #555; }
.ohrada { fill: rgba(255, 0, 0, 0.2); stroke: #ff0000; stroke-width: 4; stroke-linejoin: round; }
.ctrl rect { fill: #808080; fill-opacity: 0.7; stroke: #d8d8d8; stroke-width: 1; }
.bar { fill: #909090; fill-opacity: 0.55; stroke: #fff; stroke-opacity: 0.4; stroke-width: 1; }
.tbtn rect { fill: #e6e4dc; stroke: #b0aea4; stroke-width: 1; }
.tbtn rect[fill="#f2b71f"] { fill: #f2b71f; stroke: #d8d4b0; }
.popup { position: absolute; left: 77px; top: 478px; width: 288px; height: 380px; box-sizing: border-box; background: #efefef; border: 1px solid #c4c4c4; border-radius: 4px; box-shadow: 1px 2px 4px rgba(0, 0, 0, 0.25); padding: 0 5px 5px; display: flex; flex-direction: column; font-family: "DejaVu Sans", sans-serif; }
.ptitle { height: 23px; flex: none; display: flex; justify-content: space-between; align-items: center; font-weight: 700; font-size: 10.500px; color: #555; padding-left: 0; }
.pclose { width: 13px; height: 13px; border: 1px solid #aaa; border-radius: 2px; font-size: 10px; line-height: 13px; text-align: center; font-weight: 400; color: #333; background: #f4f4f4; }
.pbody { flex: 1; background: #e3e3e3; border: 1px solid #d2d2d2; padding: 9px 8px; box-sizing: border-box; }
.ptext { margin: 0; font-size: 10.900px; line-height: 14px; color: #222; letter-spacing: -0.1px; }
.gap { margin-top: 14px; }
.icoline { display: flex; align-items: flex-end; gap: 4px; height: 28px; box-sizing: border-box; padding-bottom: 3px; white-space: pre; }
.polyi { margin-bottom: 3px; }
.box { background: #fff; border: 1px solid #000; box-sizing: border-box; font-size: 11px; color: #111; }
.b1 { margin-top: 4px; height: 28px; display: flex; justify-content: space-between; align-items: center; padding: 0 6px; font-size: 11.200px; }
.b2 { margin-top: 8px; height: 60px; padding: 7px 6px 0; }
.brow { display: flex; justify-content: space-between; line-height: 16px; font-size: 10.800px; color: #222; }
.brow.main { font-size: 10.900px; color: #111; }
.act { margin-top: 8px; height: 28px; display: flex; align-items: center; padding-left: 4px; gap: 4px; }
.act2 { height: 27px; }
.act svg { margin-top: -5px; }
.lnk { font-size: 10.800px; color: #0b5bd8; margin-top: 3px; }
.dis { color: #8a8a8a; }
.ftr { height: 26px; flex: none; background: #e9e9e9; border-top: 1px solid #ccc; box-sizing: border-box; display: flex; align-items: center; padding-left: 4px; }
.scale { width: 42px; height: 14px; box-sizing: border-box; border-left: 2px solid #000; border-right: 2px solid #000; border-bottom: 2px solid #000; background: #fff; font-size: 12px; line-height: 12px; text-align: center; margin-top: 1px; color: #222; }
.fsep { width: 1px; height: 16px; background: #aaa; margin: 0 4px 0 4px; }
.copy { font-size: 14px; color: #222; margin-left: 1px; }
.copy i { font-style: normal; font-size: 15px; }
.ffwin { width: 1005px; height: 1077px; display: flex; flex-direction: column; flex: none; border-top: 1px solid #47565a; box-sizing: border-box; background: #fff; }
.ffbar { height: 31px; flex: none; background: #000; display: flex; align-items: center; padding-left: 8px; color: #fff; }
.fftitle { font: 11.600px "Open Sans", "Noto Sans", sans-serif; margin-left: 5px; letter-spacing: -0.1px; }
.wctl { margin-left: auto; display: flex; gap: 34px; padding-right: 18px; }
.fftool { height: 40px; flex: none; background: #6b675c; display: flex; align-items: center; border-bottom: 1px solid #4a473f; box-sizing: content-box; }
.urlbox { margin-left: 5px; width: 952px; height: 32px; background: #eceae6; border-radius: 4px; display: flex; align-items: center; padding-left: 8px; gap: 11px; box-sizing: border-box; }
.url { font: 13px "Open Sans", "Noto Sans", sans-serif; color: #555; margin-left: 0; white-space: nowrap; }
.url em { font-style: normal; color: #111; }
.star { margin-left: auto; margin-right: 7px; }
.burger { margin-left: 15px; }
.ffbody { flex: 1; display: flex; min-height: 0; overflow: hidden; }
.content { width: 987px; flex: none; padding: 8px 8px 0; box-sizing: border-box; overflow: hidden; }
.banner { height: 44px; display: flex; align-items: center; background: linear-gradient(90deg, #fff 0%, #c4e6ec 40%, #2ba0b8 100%); overflow: hidden; }
.banner h1 { margin: 0 0 0 19px; font-size: 15.500px; font-weight: 700; color: #111; white-space: nowrap; }
.blk text { fill: #000; }
.export { height: 42px; display: flex; justify-content: flex-end; align-items: center; padding-top: 4px; box-sizing: border-box; font-size: 12px; color: #0b5bd8; }
.tbl { width: 971px; border-collapse: collapse; table-layout: fixed; font-size: 12px; line-height: 15px; color: #333; }
.tbl td, .tbl th { border: 1px solid #cfcfcf; padding: 3px; box-sizing: border-box; overflow: hidden; }
.hrow th { background: #808080; color: #f2f2f2; height: 53px; font-weight: 700; text-align: center; position: relative; padding-right: 14px; border-color: #d8d8d8; border-top: 1px solid #ccc; }
.hrow th.sorted { background: #565656; }
.hrow th.noicon { padding-right: 3px; }
.sort { position: absolute; right: 5px; top: 50%; width: 7px; height: 12px; margin-top: -6px; }
.sort::before, .sort::after { content: ""; position: absolute; left: 0; border-left: 3.500px solid transparent; border-right: 3.500px solid transparent; }
.sort::before { top: 0; border-bottom: 5px solid #1c1c1c; }
.sort::after { bottom: 0; border-top: 5px solid #1c1c1c; }
.sort.one::before { display: none; }
.frow td { background: #ededed; height: 36px; padding: 0 4px; }
.fin { height: 23px; background: #fff; border: 1px solid #c8c8c8; border-radius: 3px; box-sizing: border-box; color: #f00; font-weight: 400; font-size: 13px; line-height: 21px; padding-left: 4px; white-space: nowrap; }
.fin.off { background: #f2f2f2; }
.tbl tbody td { vertical-align: middle; }
.r { text-align: right; }
.c { text-align: center; }
.own { background: #cdf5f8; }
.kraj { background: #ff9fcc; white-space: nowrap; }
.cz { color: #0b5bd8; font-weight: 700; }
.sb { width: 18px; flex: none; background: #f0f0f0; position: relative; display: flex; flex-direction: column; align-items: center; padding-top: 3px; height: 1004px; box-sizing: border-box; }
.sa { flex: none; }
.thumb { width: 18px; height: 352px; background: #cdcdcd; margin-top: 5px; }
.sa.dn { margin-top: auto; margin-bottom: 5px; }
</style>

<style>
.logotext text { font-family: "Liberation Sans", Arial, sans-serif; font-weight: 700; fill: #0b1030; }
</style>
